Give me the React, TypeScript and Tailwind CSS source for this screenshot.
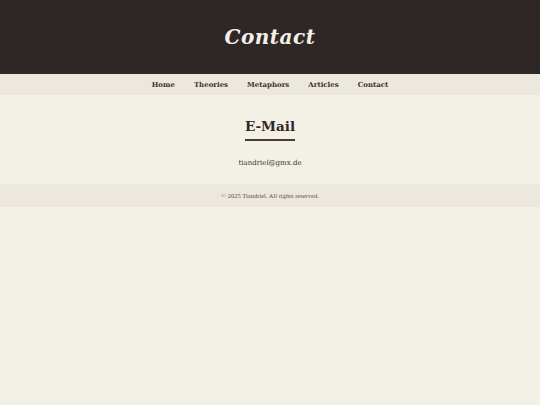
export default function App() {
  const links = ["Home", "Theories", "Metaphors", "Articles", "Contact"];

  return (
    <div className="min-h-[405px] bg-[#f3f0e6] text-[#2f2626]" style={{ fontFamily: '"DejaVu Serif", Georgia, serif' }}>
      <header className="bg-[#2f2626] h-[74px] flex items-center justify-center">
        <h1 className="text-[20px] font-bold italic text-[#f3f0e6] tracking-wide">Contact</h1>
      </header>

      <nav className="bg-[#ede8de] h-[21px] pt-[1px] flex items-center justify-center gap-[19px]">
        {links.map((l) => (
          <a key={l} href="#" className="text-[7px] font-bold text-[#3a3030]">
            {l}
          </a>
        ))}
      </nav>

      <main className="flex flex-col items-center pt-[22px] pb-[16px]">
        <h2 className="text-[13.5px] leading-[18px] font-bold pb-[4px] border-b-2 border-[#4a3a36]">E-Mail</h2>
        <p className="mt-[17px] text-[7px] leading-[10px] text-[#3a3030]">tiandriel@gmx.de</p>
      </main>

      <footer className="bg-[#ece8dd] h-[23px] pt-[1px] flex items-center justify-center">
        <p className="text-[6.5px] text-[#5a5050]" style={{ fontFamily: '"Liberation Serif", serif' }}>
          © 2025 Tiandriel. All rights reserved.
        </p>
      </footer>
    </div>
  );
}
